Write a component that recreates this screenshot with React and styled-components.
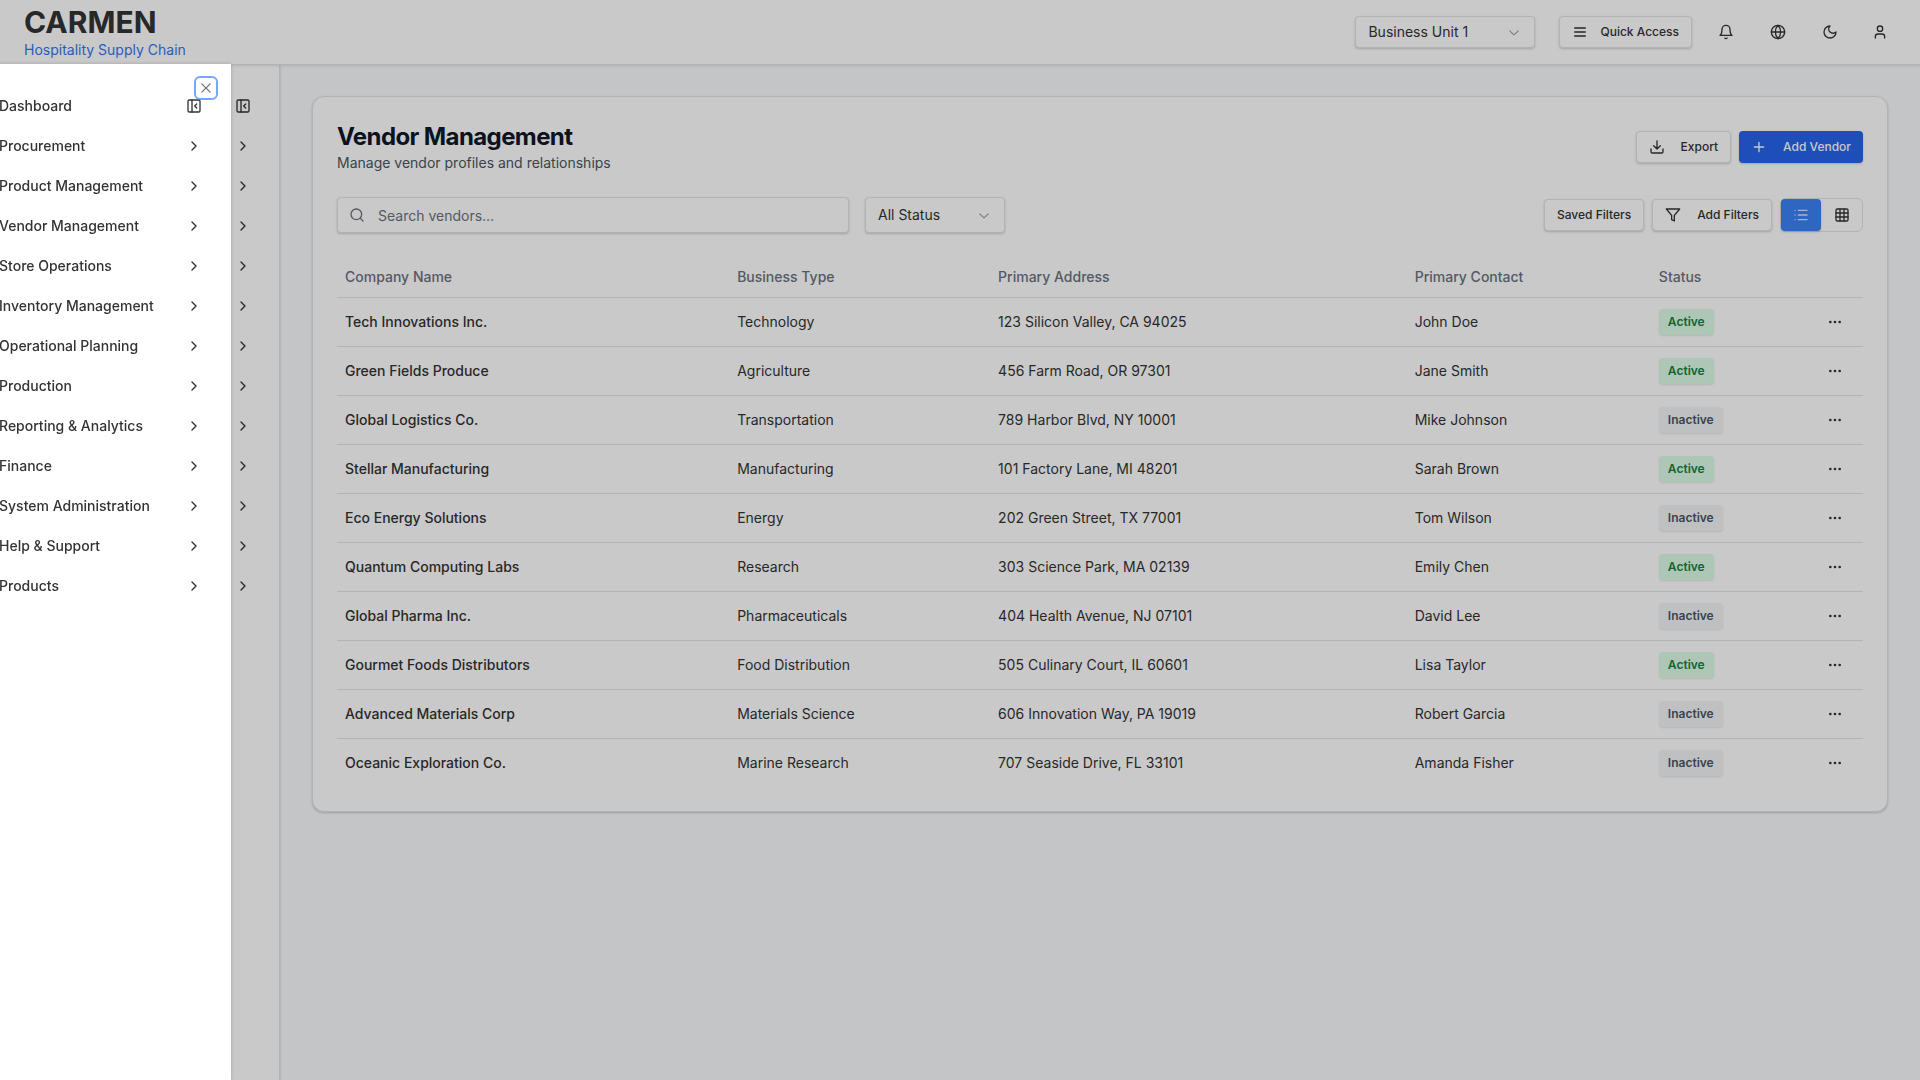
import React from "react";
import styled, { createGlobalStyle, css } from "styled-components";

const GlobalStyle = createGlobalStyle`
  *, *::before, *::after { box-sizing: border-box; }
  body {
    margin: 0;
    background: #f8fafc;
    color: #333333;
    font-family: Inter, "Liberation Sans", sans-serif;
    font-size: 14px;
    line-height: 20px;
    -webkit-font-smoothing: antialiased;
  }
  button, input, select { font: inherit; color: inherit; margin: 0; }
  button { cursor: pointer; }
  h1, p, ul { margin: 0; padding: 0; }
  a { color: inherit; text-decoration: none; }
`;

const softShadow = "0 1px 3px rgba(0, 0, 0, 0.1), 0 1px 2px rgba(0, 0, 0, 0.1)";
const border = "#e2e4e9";

/* ---------- icons ---------- */

const Svg = styled.svg`
  display: block;
  flex: none;
  width: 16px;
  height: 16px;
  fill: none;
  stroke: currentColor;
  stroke-width: 2;
  stroke-linecap: round;
  stroke-linejoin: round;
`;

const SolidSvg = styled(Svg)`
  fill: currentColor;
  stroke: none;
`;

const paths = {
  menu: <path d="M4 6h16M4 12h16M4 18h16" />,
  bell: <path d="M6 8a6 6 0 0 1 12 0c0 7 3 9 3 9H3s3-2 3-9M10.3 21a1.94 1.94 0 0 0 3.4 0" />,
  globe: (
    <>
      <circle cx="12" cy="12" r="10" />
      <path d="M12 2a14.5 14.5 0 0 0 0 20 14.5 14.5 0 0 0 0-20M2 12h20" />
    </>
  ),
  moon: <path d="M12 3a6 6 0 0 0 9 9 9 9 0 1 1-9-9Z" />,
  user: (
    <>
      <path d="M19 21v-2a4 4 0 0 0-4-4H9a4 4 0 0 0-4 4v2" />
      <circle cx="12" cy="7" r="4" />
    </>
  ),
  download: <path d="M21 15v4a2 2 0 0 1-2 2H5a2 2 0 0 1-2-2v-4M7 10l5 5 5-5M12 15V3" />,
  plus: <path d="M5 12h14M12 5v14" />,
  filter: <path d="M22 3H2l8 9.46V19l4 2v-8.54L22 3z" />,
  list: <path d="M8 5h13M8 12h13M8 19h13M3 5h.01M3 12h.01M3 19h.01" />,
  grid: (
    <>
      <rect x="3" y="3" width="18" height="18" rx="2" />
      <path d="M3 9h18M3 15h18M9 3v18M15 3v18" />
    </>
  ),
  search: (
    <>
      <circle cx="11" cy="11" r="8" />
      <path d="m21 21-4.3-4.3" />
    </>
  ),
  more: (
    <>
      <circle cx="12" cy="12" r="1" />
      <circle cx="19" cy="12" r="1" />
      <circle cx="5" cy="12" r="1" />
    </>
  ),
  right: <path d="m9 18 6-6-6-6" />,
  panel: (
    <>
      <rect x="3" y="3" width="18" height="18" rx="2" />
      <path d="M9 3v18M16 15l-3-3 3-3" />
    </>
  ),
};

const Icon = ({ name }) => (
  <Svg viewBox="0 0 24 24" aria-hidden="true">
    {paths[name]}
  </Svg>
);

const CaretIcon = () => (
  <SolidSvg viewBox="0 0 15 15" aria-hidden="true">
    <path d="M3.135 6.158C3.324 5.957 3.64 5.946 3.842 6.135L7.5 9.565L11.158 6.135C11.36 5.946 11.676 5.957 11.865 6.158C12.054 6.359 12.043 6.676 11.842 6.865L7.842 10.615C7.65 10.795 7.35 10.795 7.158 10.615L3.158 6.865C2.957 6.676 2.946 6.359 3.135 6.158Z" />
  </SolidSvg>
);

const CrossIcon = () => (
  <SolidSvg viewBox="0 0 15 15" aria-hidden="true">
    <path d="M11.782 4.032C12.006 3.807 12.006 3.443 11.782 3.218C11.557 2.994 11.193 2.994 10.969 3.218L7.5 6.687L4.032 3.218C3.807 2.994 3.443 2.994 3.218 3.218C2.994 3.443 2.994 3.807 3.218 4.032L6.687 7.5L3.218 10.968C2.994 11.193 2.994 11.557 3.218 11.782C3.443 12.006 3.807 12.006 4.032 11.782L7.5 8.313L10.969 11.782C11.193 12.006 11.557 12.006 11.782 11.782C12.006 11.557 12.006 11.193 11.782 10.968L8.313 7.5L11.782 4.032Z" />
  </SolidSvg>
);

/* ---------- page frame ---------- */

const Page = styled.div`
  display: flex;
  flex-direction: column;
  min-height: 100vh;
`;

const Header = styled.header`
  position: relative;
  z-index: 1;
  display: flex;
  align-items: center;
  justify-content: space-between;
  height: 64px;
  padding: 0 24px;
  background: #fff;
  box-shadow: 0 1px 0 ${border}, 0 2px 3px rgba(0, 0, 0, 0.1);
`;

const Brand = styled.a`
  display: flex;
  flex-direction: column;
`;

const BrandName = styled.span`
  font-size: 30px;
  line-height: 36px;
  font-weight: 700;
`;

const BrandTag = styled.span`
  color: #3377ee;
`;

const HeaderTools = styled.div`
  display: flex;
  align-items: center;
  gap: 16px;
`;

const UnitSlot = styled.div`
  width: 188px;
  padding-right: 8px;
`;

const IconButton = styled.button`
  display: grid;
  place-items: center;
  width: ${(p) => p.$width || 36}px;
  height: 32px;
  padding: 0;
  border: 0;
  border-radius: 6px;
  background: none;
`;

const Body = styled.div`
  flex: 1;
  display: flex;
  align-items: stretch;
`;

const Sidebar = styled.aside`
  flex: none;
  width: 280px;
  padding: 22px 28px;
  background: #fff;
  border-right: 1px solid ${border};
  box-shadow: ${softShadow};
`;

const Rail = styled.div`
  display: flex;
  flex-direction: column;
  align-items: flex-end;
`;

const RailButton = styled(IconButton)`
  width: 16px;
  height: 40px;
`;

const Main = styled.main`
  flex: 1;
  min-width: 0;
  padding: 32px;
`;

/* ---------- shared controls ---------- */

const Button = styled.button`
  display: inline-flex;
  align-items: center;
  gap: 16px;
  height: 32px;
  padding: 0 12px;
  border: 1px solid ${border};
  border-radius: 4px;
  background: #fff;
  font-size: 12px;
  line-height: 16px;
  font-weight: 500;
  white-space: nowrap;
  box-shadow: ${softShadow};
  ${(p) =>
    p.$compact &&
    css`
      gap: 12px;
    `}
  ${(p) =>
    p.$primary &&
    css`
      border: 0;
      background: #2563eb;
      color: #fff;
    `}
`;

const SelectWrap = styled.div`
  position: relative;
  width: ${(p) => p.$width};
  height: ${(p) => p.$height};
`;

const SelectBox = styled.select`
  appearance: none;
  width: 100%;
  height: 100%;
  padding: 0 32px 0 12px;
  border: 1px solid ${border};
  border-radius: 4px;
  background: #fff;
  box-shadow: ${softShadow};
`;

const SelectCaret = styled.span`
  position: absolute;
  top: 50%;
  right: 13px;
  transform: translateY(-50%);
  opacity: 0.5;
  pointer-events: none;
`;

const Select = ({ label, value, width, height }) => (
  <SelectWrap $width={width} $height={height}>
    <SelectBox aria-label={label} defaultValue={value}>
      <option value={value}>{value}</option>
    </SelectBox>
    <SelectCaret>
      <CaretIcon />
    </SelectCaret>
  </SelectWrap>
);

/* ---------- vendor card ---------- */

const Card = styled.section`
  display: flex;
  flex-direction: column;
  gap: 24px;
  padding: 24px;
  background: #fff;
  border: 1px solid ${border};
  border-radius: 12px;
  box-shadow: ${softShadow};
`;

const Bar = styled.div`
  display: flex;
  align-items: center;
  justify-content: space-between;
  gap: 16px;
`;

const Cluster = styled.div`
  display: flex;
  align-items: center;
  gap: ${(p) => p.$gap || 8}px;
  ${(p) => p.$grow && "flex: 1;"}
`;

const Title = styled.h1`
  color: #0f172a;
  font-size: 24px;
  line-height: 32px;
  font-weight: 700;
  letter-spacing: -0.025em;
`;

const Subtitle = styled.p`
  color: #4b5563;
`;

const SearchField = styled.label`
  flex: 0 1 512px;
  display: flex;
  align-items: center;
  gap: 13px;
  height: 36px;
  padding: 0 11px;
  border: 1px solid ${border};
  border-radius: 4px;
  background: #fff;
  color: #6b7280;
  box-shadow: ${softShadow};
`;

const SearchInput = styled.input`
  flex: 1;
  min-width: 0;
  padding: 2px 0 0;
  border: 0;
  outline: 0;
  background: none;
  &::placeholder {
    color: #6b7280;
    opacity: 1;
  }
`;

const ViewToggle = styled.div`
  display: flex;
  gap: 1px;
  border: 1px solid ${border};
  border-radius: 6px;
`;

const ViewButton = styled(IconButton)`
  border-radius: 4px;
  ${(p) =>
    p.$active &&
    css`
      background: #3b82f6;
      color: #fff;
      box-shadow: ${softShadow};
    `}
  svg {
    opacity: ${(p) => (p.$active ? 0.8 : 1)};
  }
`;

const Table = styled.table`
  width: 100%;
  table-layout: fixed;
  border-collapse: separate;
  border-spacing: 0;
`;

const Col = styled.col`
  width: ${(p) => p.$width};
`;

const Th = styled.th`
  height: 41px;
  padding: 0 8px;
  border-bottom: 1px solid ${border};
  color: #6b7280;
  font-weight: 500;
  text-align: left;
`;

const Td = styled.td`
  padding: 8px;
  border-bottom: 1px solid ${border};
  font-weight: ${(p) => (p.$strong ? 500 : 400)};
  tr:last-child > & {
    border-bottom: 0;
  }
`;

const ActionCell = styled.div`
  display: flex;
  justify-content: flex-end;
`;

const Badge = styled.span`
  display: inline-flex;
  padding: 4px 8px;
  border: 1px solid transparent;
  border-radius: 4px;
  background: ${(p) => (p.$active ? "#dcfce7" : "#f3f4f6")};
  color: ${(p) => (p.$active ? "#15803d" : "#475569")};
  font-size: 12px;
  line-height: 16px;
  font-weight: 600;
  vertical-align: middle;
  box-shadow: 0 1px 2px rgba(0, 0, 0, 0.1);
`;

/* ---------- drawer ---------- */

const Overlay = styled.div`
  position: fixed;
  inset: 0;
  z-index: 2;
  background: rgba(0, 0, 0, 0.21);
`;

/* Caught part-way through its slide from the left edge. */
const Drawer = styled.aside`
  position: fixed;
  z-index: 3;
  top: 64px;
  bottom: 0;
  left: -49px;
  width: 280px;
  padding: 22px 29px 22px 48px;
  background: #fff;
  box-shadow: 0 0 4px rgba(0, 0, 0, 0.2);
`;

const NavItem = styled.a`
  display: flex;
  align-items: center;
  justify-content: space-between;
  height: 40px;
  font-weight: 500;
`;

const CloseButton = styled.button`
  position: absolute;
  top: 16px;
  right: 17px;
  display: grid;
  place-items: center;
  width: 16px;
  height: 16px;
  padding: 0;
  border: 0;
  border-radius: 2px;
  outline: 2px solid #3b82f6;
  outline-offset: 2px;
  background: none;
  opacity: 0.7;
`;

const NAV = [
  "Dashboard",
  "Procurement",
  "Product Management",
  "Vendor Management",
  "Store Operations",
  "Inventory Management",
  "Operational Planning",
  "Production",
  "Reporting & Analytics",
  "Finance",
  "System Administration",
  "Help & Support",
  "Products",
];

const COLUMNS = [
  ["Company Name", "25.7%"],
  ["Business Type", "17.1%"],
  ["Primary Address", "27.3%"],
  ["Primary Contact", "16%"],
  ["Status", "8%"],
];

const VENDORS = [
  ["Tech Innovations Inc.", "Technology", "123 Silicon Valley, CA 94025", "John Doe", true],
  ["Green Fields Produce", "Agriculture", "456 Farm Road, OR 97301", "Jane Smith", true],
  ["Global Logistics Co.", "Transportation", "789 Harbor Blvd, NY 10001", "Mike Johnson", false],
  ["Stellar Manufacturing", "Manufacturing", "101 Factory Lane, MI 48201", "Sarah Brown", true],
  ["Eco Energy Solutions", "Energy", "202 Green Street, TX 77001", "Tom Wilson", false],
  ["Quantum Computing Labs", "Research", "303 Science Park, MA 02139", "Emily Chen", true],
  ["Global Pharma Inc.", "Pharmaceuticals", "404 Health Avenue, NJ 07101", "David Lee", false],
  ["Gourmet Foods Distributors", "Food Distribution", "505 Culinary Court, IL 60601", "Lisa Taylor", true],
  ["Advanced Materials Corp", "Materials Science", "606 Innovation Way, PA 19019", "Robert Garcia", false],
  ["Oceanic Exploration Co.", "Marine Research", "707 Seaside Drive, FL 33101", "Amanda Fisher", false],
];

const navIcon = (index) => (index === 0 ? "panel" : "right");

export default function App() {
  return (
    <Page>
      <GlobalStyle />
      <Header>
        <Brand href="#">
          <BrandName>CARMEN</BrandName>
          <BrandTag>Hospitality Supply Chain</BrandTag>
        </Brand>
        <HeaderTools>
          <UnitSlot>
            <Select label="Business unit" value="Business Unit 1" width="100%" height="32px" />
          </UnitSlot>
          <Button type="button" $compact>
            <Icon name="menu" />
            Quick Access
          </Button>
          <IconButton type="button" aria-label="Notifications">
            <Icon name="bell" />
          </IconButton>
          <IconButton type="button" aria-label="Language">
            <Icon name="globe" />
          </IconButton>
          <IconButton type="button" aria-label="Dark mode">
            <Icon name="moon" />
          </IconButton>
          <IconButton type="button" aria-label="Account" $width={32}>
            <Icon name="user" />
          </IconButton>
        </HeaderTools>
      </Header>

      <Body>
        <Sidebar>
          <Rail>
            {NAV.map((item, index) => (
              <RailButton key={item} type="button" aria-label={item}>
                <Icon name={navIcon(index)} />
              </RailButton>
            ))}
          </Rail>
        </Sidebar>

        <Main>
          <Card>
            <Bar>
              <div>
                <Title>Vendor Management</Title>
                <Subtitle>Manage vendor profiles and relationships</Subtitle>
              </div>
              <Cluster>
                <Button type="button">
                  <Icon name="download" />
                  Export
                </Button>
                <Button type="button" $primary>
                  <Icon name="plus" />
                  Add Vendor
                </Button>
              </Cluster>
            </Bar>

            <Bar>
              <Cluster $gap={16} $grow>
                <SearchField>
                  <Icon name="search" />
                  <SearchInput type="text" placeholder="Search vendors..." aria-label="Search vendors" />
                </SearchField>
                <Select label="Status" value="All Status" width="140px" height="36px" />
              </Cluster>
              <Cluster>
                <Button type="button">Saved Filters</Button>
                <Button type="button">
                  <Icon name="filter" />
                  Add Filters
                </Button>
                <ViewToggle>
                  <ViewButton type="button" aria-label="List view" $width={40} $active>
                    <Icon name="list" />
                  </ViewButton>
                  <ViewButton type="button" aria-label="Grid view" $width={40}>
                    <Icon name="grid" />
                  </ViewButton>
                </ViewToggle>
              </Cluster>
            </Bar>

            <Table>
              <colgroup>
                {COLUMNS.map(([name, width]) => (
                  <Col key={name} $width={width} />
                ))}
                <Col />
              </colgroup>
              <thead>
                <tr>
                  {COLUMNS.map(([name]) => (
                    <Th key={name} scope="col">
                      {name}
                    </Th>
                  ))}
                  <Th as="td" />
                </tr>
              </thead>
              <tbody>
                {VENDORS.map(([company, type, address, contact, active]) => (
                  <tr key={company}>
                    <Td $strong>{company}</Td>
                    <Td>{type}</Td>
                    <Td>{address}</Td>
                    <Td>{contact}</Td>
                    <Td>
                      <Badge $active={active}>{active ? "Active" : "Inactive"}</Badge>
                    </Td>
                    <Td>
                      <ActionCell>
                        <IconButton type="button" aria-label={`Actions for ${company}`} $width={40}>
                          <Icon name="more" />
                        </IconButton>
                      </ActionCell>
                    </Td>
                  </tr>
                ))}
              </tbody>
            </Table>
          </Card>
        </Main>
      </Body>

      <Overlay />
      <Drawer aria-label="Navigation">
        <nav>
          {NAV.map((item, index) => (
            <NavItem key={item} href="#">
              {item}
              <Icon name={navIcon(index)} />
            </NavItem>
          ))}
        </nav>
        <CloseButton type="button" aria-label="Close">
          <CrossIcon />
        </CloseButton>
      </Drawer>
    </Page>
  );
}
